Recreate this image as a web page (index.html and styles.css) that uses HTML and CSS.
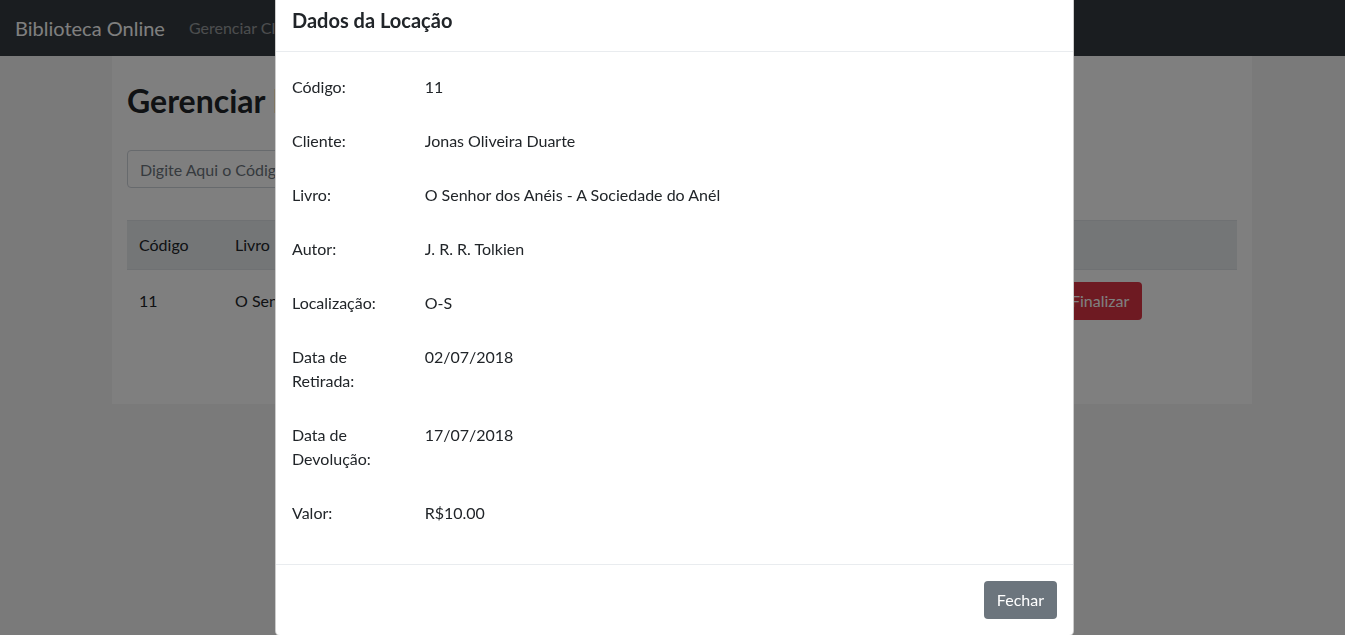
FILE: index.html
```html
<!DOCTYPE html>
<html lang="pt-BR">
<head>
<meta charset="utf-8">
<title>Biblioteca Online</title>
<link rel="stylesheet" href="styles.css">
</head>
<body>
<nav class="navbar">
  <span class="brand">Biblioteca Online</span>
  <a class="nav-link">Gerenciar Clientes</a>
  <a class="nav-link">Gerenciar Livros</a>
  <a class="nav-link">Gerenciar Locações</a>
</nav>
<main class="container">
  <h2 class="page-title">Gerenciar Locações</h2>
  <input class="search" type="text" placeholder="Digite Aqui o Código da Locação">
  <table class="table">
    <thead>
      <tr><th class="c-cod">Código</th><th>Livro</th><th>Cliente</th><th>Retirada</th><th class="c-act"></th></tr>
    </thead>
    <tbody>
      <tr><td>11</td><td>O Senhor dos Anéis</td><td>Jonas Oliveira Duarte</td><td>02/07/2018</td><td class="c-act"><button class="btn btn-danger">Finalizar</button></td></tr>
    </tbody>
  </table>
</main>

<div class="backdrop"></div>
<div class="modal">
  <div class="modal-dialog">
    <div class="modal-header"><h5 class="modal-title">Dados da Locação</h5></div>
    <div class="modal-body">
      <div class="row"><div class="lbl">Código:</div><div class="val">11</div></div>
      <div class="row"><div class="lbl">Cliente:</div><div class="val">Jonas Oliveira Duarte</div></div>
      <div class="row"><div class="lbl">Livro:</div><div class="val">O Senhor dos Anéis - A Sociedade do Anél</div></div>
      <div class="row"><div class="lbl">Autor:</div><div class="val">J. R. R. Tolkien</div></div>
      <div class="row"><div class="lbl">Localização:</div><div class="val">O-S</div></div>
      <div class="row"><div class="lbl">Data de Retirada:</div><div class="val">02/07/2018</div></div>
      <div class="row"><div class="lbl">Data de Devolução:</div><div class="val">17/07/2018</div></div>
      <div class="row"><div class="lbl">Valor:</div><div class="val">R$10.00</div></div>
    </div>
    <div class="modal-footer"><button class="btn btn-secondary">Fechar</button></div>
  </div>
</div>
</body>
</html>
```

FILE: styles.css
```css
* { box-sizing: border-box; }
html, body { margin: 0; padding: 0; }
body {
  font-family: Lato, "Open Sans", "Liberation Sans", sans-serif;
  font-size: 16px;
  line-height: 1.5;
  color: #212529;
  background: #f5f5f5;
  height: 635px;
  overflow: hidden;
}
.navbar {
  height: 56px;
  background: #343a40;
  display: flex;
  align-items: center;
  padding: 8px 15px;
}
.brand {
  font-size: 20px;
  color: #fff;
  margin-right: 16px;
}
.nav-link {
  color: rgba(255,255,255,.5);
  padding: 8px;
  font-size: 16px;
}
.container {
  width: 1140px;
  margin: 0 0 0 112px;
  background: #fff;
  padding: 26px 15px 72px;
}
.page-title {
  font-size: 32px;
  font-weight: 700;
  line-height: 38px;
  margin: 0 0 30px;
}
.search {
  display: block;
  width: 540px;
  height: 38px;
  padding: 6px 12px;
  font: inherit;
  border: 1px solid #ced4da;
  border-radius: 4px;
  color: #495057;
}
.search::placeholder { color: #6c757d; }
.table {
  margin-top: 32px;
  width: 100%;
  border-collapse: collapse;
  table-layout: fixed;
}
.table th, .table td {
  text-align: left;
  padding: 12px;
  font-weight: 400;
  border-top: 1px solid #dee2e6;
  vertical-align: middle;
}
.table thead th {
  background: #e9ecef;
  border-bottom: 1px solid #dee2e6;
}
.c-cod { width: 96px; }
.c-act { width: 191px; }
.btn {
  font: inherit;
  border: 1px solid transparent;
  border-radius: 4px;
  padding: 6px 12px;
  line-height: 24px;
  color: #fff;
}
.btn-danger { background: #dc3545; }
.btn-secondary { background: #6c757d; }

.backdrop {
  position: fixed;
  inset: 0;
  background: rgba(0,0,0,.5);
}
.modal {
  position: fixed;
  inset: 0;
}
.modal-dialog {
  width: 799px;
  margin: -12px auto 0;
  position: relative;
  left: 2px;
  background: #fff;
  border: 1px solid rgba(0,0,0,.2);
  border-radius: 5px;
}
.modal-header {
  padding: 16px;
  border-bottom: 1px solid #e9ecef;
}
.modal-title {
  margin: 0;
  font-size: 20px;
  line-height: 30px;
  font-weight: 700;
}
.modal-body { padding: 16px; }
.row {
  display: grid;
  grid-template-columns: 102.67px 1fr;
  column-gap: 30px;
  padding: 7px 0;
  margin-bottom: 16px;
}
.modal-footer {
  padding: 16px;
  border-top: 1px solid #e9ecef;
  display: flex;
  justify-content: flex-end;
}
```
